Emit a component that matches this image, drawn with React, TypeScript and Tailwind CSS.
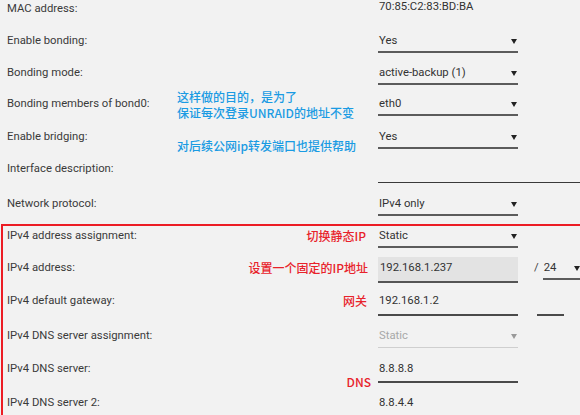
import React from 'react';

const font = { fontFamily: 'Roboto, "Noto Sans CJK SC", sans-serif' };
const cjk = { fontFamily: '"Noto Sans CJK SC", sans-serif' };

const Arrow = ({ muted }: { muted?: boolean }) => (
  <svg width="6" height="5" viewBox="0 0 6 5" className="shrink-0">
    <polygon points="0,0 6,0 3,5" fill={muted ? '#9a9a9a' : '#222'} />
  </svg>
);

const Select = ({ value, muted, w = 'w-[140px]' }: { value: string; muted?: boolean; w?: string }) => (
  <div
    className={`${w} flex items-center justify-between pl-[1px] pr-[1px] leading-[20px] ${
      muted ? 'h-[22px] border-b border-[#cfcfcf] text-[#a8a8a8]' : 'h-[22px] border-b-2 border-[#5c5c5c] text-[#333]'
    }`}
  >
    <span className="h-[20px] self-start">{value}</span>
    <span className="self-start h-[20px] flex items-center">
      <Arrow muted={muted} />
    </span>
  </div>
);

const Input = ({ value, h = 'h-[24px]' }: { value: string; h?: string }) => (
  <div className={`w-[140px] ${h} pl-[1px] leading-[20px] border-b-2 border-[#4a4a4a] text-[#333]`}>{value}</div>
);

type Row = { label: string; mt: string; value: React.ReactNode };

const topRows: Row[] = [
  { label: 'MAC address:', mt: '-mt-px', value: <div className="pl-[1px] text-[#333]">70:85:C2:83:BD:BA</div> },
  { label: 'Enable bonding:', mt: 'mt-[12px]', value: <Select value="Yes" /> },
  { label: 'Bonding mode:', mt: 'mt-[12px]', value: <Select value="active-backup (1)" /> },
  { label: 'Bonding members of bond0:', mt: 'mt-[11px]', value: <Select value="eth0" /> },
  { label: 'Enable bridging:', mt: 'mt-[13px]', value: <Select value="Yes" /> },
  {
    label: 'Interface description:',
    mt: 'mt-[12px]',
    value: <div className="w-[220px] h-[24px] border-b border-[#3a3a3a]" />,
  },
  { label: 'Network protocol:', mt: 'mt-[15px]', value: <Select value="IPv4 only" /> },
];

const boxRows: Row[] = [
  { label: 'IPv4 address assignment:', mt: 'mt-0', value: <Select value="Static" /> },
  {
    label: 'IPv4 address:',
    mt: 'mt-[12px]',
    value: (
      <div className="flex items-start">
        <div className="w-[140px] h-[26px] -mt-px pl-[2px] leading-[22px] bg-[#e3e3e3] border-b-2 border-[#555] text-[#333]">
          192.168.1.237
        </div>
        <span className="ml-[16px] leading-[20px] text-[#444]">/</span>
        <div className="ml-[4px]">
          <Select value="24" w="w-[38px]" />
        </div>
      </div>
    ),
  },
  {
    label: 'IPv4 default gateway:',
    mt: 'mt-[13px]',
    value: (
      <div className="flex items-start">
        <Input value="192.168.1.2" h="h-[25px]" />
        <div className="ml-[19px] w-[27px] h-[25px] border-b-2 border-[#4a4a4a]" />
      </div>
    ),
  },
  { label: 'IPv4 DNS server assignment:', mt: 'mt-[15px]', value: <Select value="Static" muted /> },
  { label: 'IPv4 DNS server:', mt: 'mt-[13px]', value: <Input value="8.8.8.8" /> },
  { label: 'IPv4 DNS server 2:', mt: 'mt-[14px]', value: <Input value="8.8.4.4" /> },
];

const FieldRow = ({ row, labelW }: { row: Row; labelW: string }) => (
  <div className={`flex items-start h-[20px] ${row.mt}`}>
    <div className={`${labelW} shrink-0 leading-[20px] text-[#3a3a3a]`}>{row.label}</div>
    <div className="shrink-0">{row.value}</div>
  </div>
);

export default function App() {
  return (
    <div className="relative w-[580px] h-[415px] overflow-hidden bg-[#f2f2f2] text-[11.3px]" style={font}>
      <div className="flex flex-col">
        {topRows.map((r) => (
          <FieldRow key={r.label} row={r} labelW="w-[378px] pl-[7px]" />
        ))}
        <div className="mt-[10px] ml-px w-[640px] h-[260px] border-2 border-[#ec1c24] flex flex-col">
          {boxRows.map((r) => (
            <FieldRow key={r.label} row={r} labelW="w-[375px] pl-[4px]" />
          ))}
        </div>
      </div>

      {/* annotations */}
      <div className="absolute left-[177px] top-[89px] leading-[16px] text-[12px] font-medium text-[#1a9be3]" style={cjk}>
        <div>这样做的目的，是为了</div>
        <div>保证每次登录UNRAID的地址不变</div>
      </div>
      <div className="absolute left-[177px] top-[138px] leading-[16px] text-[12px] font-medium text-[#1a9be3]" style={cjk}>
        对后续公网ip转发端口也提供帮助
      </div>

      <div className="absolute right-[214px] top-[228px] leading-[16px] text-[12px] font-medium text-[#e8222b]" style={cjk}>切换静态IP</div>
      <div className="absolute right-[212px] top-[260px] leading-[16px] text-[12px] font-medium text-[#e8222b]" style={cjk}>设置一个固定的IP地址</div>
      <div className="absolute right-[213px] top-[293px] leading-[16px] text-[12px] font-medium text-[#e8222b]" style={cjk}>网关</div>
      <div className="absolute right-[209px] top-[374px] leading-[16px] text-[12px] font-medium text-[#e8222b]" style={cjk}>DNS</div>
    </div>
  );
}
